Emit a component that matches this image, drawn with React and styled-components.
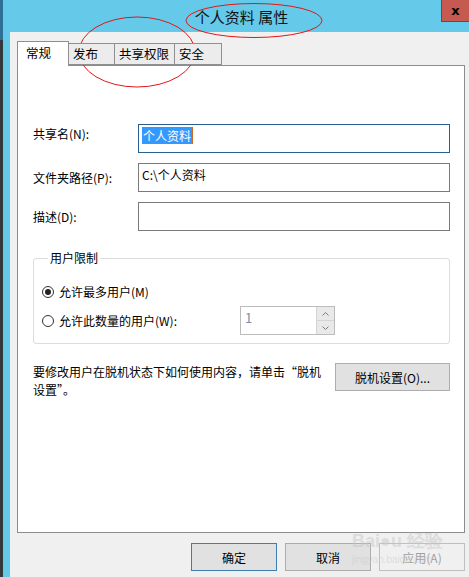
import React from 'react'
import styled, { createGlobalStyle } from 'styled-components'

const GlobalStyle = createGlobalStyle`
  html, body {
    margin: 0;
    padding: 0;
    background: #2f3a40;
  }
  body {
    font-family: "Noto Sans CJK SC", "Microsoft YaHei", "Noto Sans", sans-serif;
    font-size: 12px;
    color: #000;
  }
`

const Page = styled.div`
  position: relative;
  display: flex;
  width: 469px;
  height: 577px;
  overflow: hidden;
`

const EdgeStrip = styled.div`
  width: 3px;
  background: linear-gradient(#2e6f96 0, #2e6f96 40px, #34393c 40px);
`

const Window = styled.div`
  flex: 1;
  display: flex;
  flex-direction: column;
  background: #65c9ea;
  padding-left: 7px;
`

const TitleBar = styled.div`
  position: relative;
  height: 32px;
  display: flex;
  align-items: center;
  justify-content: center;
  padding-left: 4px;
  font-size: 15px;
  color: #111;
`

const CloseButton = styled.div`
  position: absolute;
  top: 0;
  right: 0;
  width: 28px;
  height: 22px;
  background: #c65a50;
  border-left: 1px solid #8e3a33;
  border-bottom: 1px solid #8e3a33;
  box-sizing: border-box;
  display: flex;
  align-items: center;
  justify-content: center;
  font-family: "DejaVu Sans", sans-serif;
  font-weight: bold;
  font-size: 13px;
  color: #000;
`

const Client = styled.div`
  flex: 1;
  background: #f0f0f0;
  padding: 9px 4px 0 7px;
  display: flex;
  flex-direction: column;
`

const TabStrip = styled.div`
  display: flex;
  align-items: flex-end;
  height: 24px;
`

const Tab = styled.div`
  box-sizing: border-box;
  width: ${p => p.$w}px;
  height: ${p => (p.$active ? 25 : 22)}px;
  margin-bottom: ${p => (p.$active ? -1 : 0)}px;
  margin-left: ${p => (p.$first ? 0 : -1)}px;
  position: relative;
  z-index: ${p => (p.$active ? 2 : 1)};
  background: ${p => (p.$active ? '#fff' : '#ececec')};
  border: 1px solid #8f8f8f;
  border-bottom: ${p => (p.$active ? 'none' : '1px solid #8f8f8f')};
  padding: ${p => (p.$active ? '2px 0 0 8px' : '1px 0 0 4px')};
  line-height: 18px;
  font-size: 12.5px;
`

const Panel = styled.div`
  box-sizing: border-box;
  height: 468px;
  background: #fff;
  border: 1px solid #8c8c8c;
  padding: 58px 14px 0 15px;
  display: flex;
  flex-direction: column;
`

const FieldGrid = styled.div`
  display: grid;
  grid-template-columns: 105px 312px;
  row-gap: 10px;
  align-items: center;
`

const Label = styled.div`
  line-height: 16px;
  margin-top: ${p => p.$lift || 0}px;
`

const TextBox = styled.div`
  box-sizing: border-box;
  height: 29px;
  border: 1px solid ${p => (p.$focused ? '#2a5f92' : '#7a7a7a')};
  padding: 3px 3px 0;
  line-height: 16px;
`

const Selected = styled.span`
  background: #3399ff;
  color: #fff;
  padding: 0 1px;
  border-right: 1px solid #d06a20;
`

const Group = styled.fieldset`
  margin: 20px 0 0;
  padding: 12px 0 0 8px;
  height: 93px;
  box-sizing: border-box;
  border: 1px solid #dcdcdc;
  border-radius: 3px;
  display: flex;
  flex-direction: column;
`

const Legend = styled.legend`
  padding: 0 2px;
  margin-left: 6px;
  line-height: 14px;
`

const RadioRow = styled.div`
  display: flex;
  align-items: center;
  height: ${p => p.$h}px;
`

const RadioDot = styled.span`
  box-sizing: border-box;
  width: 12px;
  height: 12px;
  border-radius: 50%;
  border: 1px solid #333;
  background: #fff;
  margin-right: 5px;
  display: flex;
  align-items: center;
  justify-content: center;
  &::after {
    content: '';
    width: 6px;
    height: 6px;
    border-radius: 50%;
    background: ${p => (p.$checked ? '#222' : 'transparent')};
  }
`

const RadioText = styled.span`
  white-space: nowrap;
`

const Spinner = styled.div`
  margin-left: 63px;
  box-sizing: border-box;
  width: 95px;
  height: 29px;
  border: 1px solid #bcbcbc;
  display: flex;
`

const SpinValue = styled.div`
  flex: 1;
  padding: 2px 0 0 4px;
  color: #7890ac;
  font-size: 13px;
  line-height: 18px;
`

const SpinButtons = styled.div`
  width: 17px;
  display: flex;
  flex-direction: column;
  border-left: 1px solid #d4d4d4;
`

const SpinButton = styled.div`
  flex: 1;
  display: flex;
  align-items: center;
  justify-content: center;
  background: #e9e9e9;
  border-bottom: ${p => (p.$top ? '1px solid #d4d4d4' : 'none')};
`

const OfflineRow = styled.div`
  display: flex;
  justify-content: space-between;
  align-items: flex-start;
  margin-top: 19px;
`

const OfflineText = styled.div`
  width: 290px;
  line-height: 18px;
`

const DialogButton = styled.button`
  box-sizing: border-box;
  width: ${p => p.$w}px;
  height: 28px;
  background: ${p => (p.$disabled ? '#f0f0f0' : '#e1e1e1')};
  border: 1px solid ${p => (p.$primary ? '#3c7fb1' : p.$disabled ? '#bfbfbf' : '#adadad')};
  color: ${p => (p.$disabled ? '#a0a0a0' : '#000')};
  font-family: inherit;
  font-size: 12px;
  padding: 0;
  cursor: default;
`

const ButtonBar = styled.div`
  display: flex;
  justify-content: flex-end;
  gap: 8px;
  padding: 10px 0 0;
`

const Watermark = styled.div`
  position: absolute;
  left: 352px;
  top: 532px;
  color: rgba(200, 200, 200, 0.5);
  font-family: "Liberation Sans", sans-serif;
  pointer-events: none;
  line-height: 1;
  white-space: nowrap;
`

const WmBig = styled.div`
  font-size: 18px;
  font-weight: bold;
`

const WmSmall = styled.div`
  font-size: 10px;
  margin-top: 5px;
`

const Annotations = styled.svg`
  position: absolute;
  left: 0;
  top: 0;
  pointer-events: none;
`

const Chevron = ({ up }) => (
  <svg width="7" height="4" viewBox="0 0 7 4">
    <path d={up ? 'M0.5 3.5 L3.5 0.5 L6.5 3.5' : 'M0.5 0.5 L3.5 3.5 L6.5 0.5'} fill="none" stroke="#7a7a7a" strokeWidth="1" />
  </svg>
)

const tabs = [
  { name: '常规', w: 52, active: true },
  { name: '发布', w: 47 },
  { name: '共享权限', w: 61 },
  { name: '安全', w: 48 },
]

export default function App() {
  return (
    <>
      <GlobalStyle />
      <Page>
        <EdgeStrip />
        <Window>
          <TitleBar>
            个人资料 属性
            <CloseButton>x</CloseButton>
          </TitleBar>
          <Client>
            <TabStrip>
              {tabs.map((t, i) => (
                <Tab key={t.name} $w={t.w} $active={t.active} $first={i === 0}>
                  {t.name}
                </Tab>
              ))}
            </TabStrip>
            <Panel>
              <FieldGrid>
                <Label $lift={-10}>共享名(N):</Label>
                <TextBox $focused>
                  <Selected>个人资料</Selected>
                </TextBox>
                <Label>文件夹路径(P):</Label>
                <TextBox>C:\个人资料</TextBox>
                <Label>描述(D):</Label>
                <TextBox />
              </FieldGrid>

              <Group>
                <Legend>用户限制</Legend>
                <RadioRow $h={29}>
                  <RadioDot $checked />
                  <RadioText>允许最多用户(M)</RadioText>
                </RadioRow>
                <RadioRow $h={29}>
                  <RadioDot />
                  <RadioText>允许此数量的用户(W):</RadioText>
                  <Spinner>
                    <SpinValue>1</SpinValue>
                    <SpinButtons>
                      <SpinButton $top>
                        <Chevron up />
                      </SpinButton>
                      <SpinButton>
                        <Chevron />
                      </SpinButton>
                    </SpinButtons>
                  </Spinner>
                </RadioRow>
              </Group>

              <OfflineRow>
                <OfflineText>
                  要修改用户在脱机状态下如何使用内容，请单击“脱机设置”。
                </OfflineText>
                <DialogButton $w={115}>脱机设置(O)...</DialogButton>
              </OfflineRow>
            </Panel>
            <ButtonBar>
              <DialogButton $w={86} $primary>确定</DialogButton>
              <DialogButton $w={86}>取消</DialogButton>
              <DialogButton $w={86} $disabled>应用(A)</DialogButton>
            </ButtonBar>
          </Client>
        </Window>
        <Watermark>
          <WmBig>Bai&#9679;u 经验</WmBig>
          <WmSmall>jingyan.baidu.com</WmSmall>
        </Watermark>
        <Annotations width="469" height="577">
          <ellipse cx="254" cy="20.5" rx="68" ry="17" fill="none" stroke="#e01818" strokeWidth="1" />
          <ellipse cx="137" cy="52" rx="58" ry="35" fill="none" stroke="#e01818" strokeWidth="1" />
        </Annotations>
      </Page>
    </>
  )
}
